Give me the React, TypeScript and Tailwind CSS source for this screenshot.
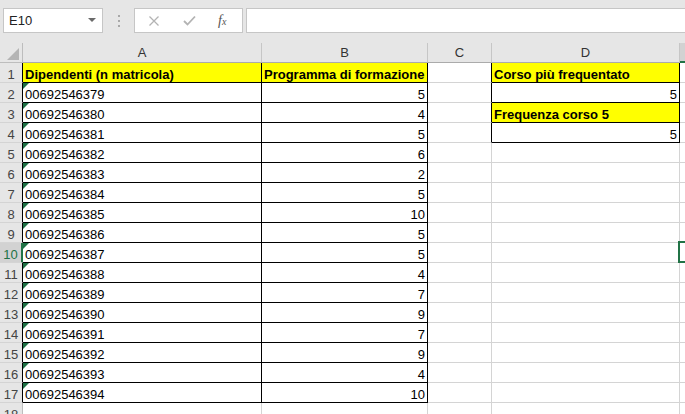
import React from 'react';

const ids = [
  '00692546379', '00692546380', '00692546381', '00692546382', '00692546383', '00692546384',
  '00692546385', '00692546386', '00692546387', '00692546388', '00692546389', '00692546390',
  '00692546391', '00692546392', '00692546393', '00692546394',
];
const corsi = [5, 4, 5, 6, 2, 5, 10, 5, 5, 4, 7, 9, 7, 9, 4, 10];

const dCells: Record<number, { text: string; head?: boolean }> = {
  1: { text: 'Corso più frequentato', head: true },
  2: { text: '5' },
  3: { text: 'Frequenza corso 5', head: true },
  4: { text: '5' },
};

const cellBase = 'h-[20px] shrink-0 border-b border-r flex items-end leading-[15px] text-[13px] text-black relative';

function GreenFlag() {
  return (
    <svg className="absolute left-0 top-0" width="6" height="6" viewBox="0 0 6 6">
      <polygon points="0,0 6,0 0,6" fill="#1e7145" />
    </svg>
  );
}

function Toolbar() {
  return (
    <div className="h-[43px] bg-[#e6e6e6] flex items-start pt-[8px] pl-[3px]">
      <div className="w-[100px] h-[25px] border border-[#c6c6c6] bg-white flex items-center justify-between pl-[5px] pr-[6px] text-[13px] text-[#222]">
        <span>E10</span>
        <svg width="8" height="5" viewBox="0 0 8 5">
          <polygon points="0,0 8,0 4,4" fill="#6a6a6a" />
        </svg>
      </div>
      <div className="w-[31px] h-[25px] flex flex-col items-center justify-center gap-[3px]">
        <span className="w-[2px] h-[2px] bg-[#a8a8a8]" />
        <span className="w-[2px] h-[2px] bg-[#a8a8a8]" />
        <span className="w-[2px] h-[2px] bg-[#a8a8a8]" />
      </div>
      <div className="w-[109px] h-[25px] border border-[#c6c6c6] bg-white flex items-center pl-[13px]">
        <svg width="12" height="12" viewBox="0 0 12 12">
          <path d="M1.5 1.5 L10.5 10.5 M10.5 1.5 L1.5 10.5" stroke="#b3b3b3" strokeWidth="1.3" fill="none" />
        </svg>
        <svg className="ml-[23px]" width="13" height="11" viewBox="0 0 13 11">
          <path d="M1 6 L4.5 9.5 L12 1.5" stroke="#b3b3b3" strokeWidth="1.8" fill="none" />
        </svg>
        <span className="ml-[22px] text-[14px] italic text-[#555] font-['Liberation_Serif',serif] leading-none">
          f<span className="text-[10px]">x</span>
        </span>
      </div>
      <div className="ml-[3px] flex-1 h-[25px] border border-r-0 border-[#c6c6c6] bg-white" />
    </div>
  );
}

function HeaderRow() {
  const cols: [string, string][] = [
    ['A', 'w-[239px]'],
    ['B', 'w-[166px]'],
    ['C', 'w-[64px]'],
    ['D', 'w-[188px]'],
  ];
  return (
    <div className="flex h-[20px] bg-[#e6e6e6]">
      <div className="w-[23px] shrink-0 h-[20px] border-r border-b border-[#bdbdbd] relative">
        <svg className="absolute left-[7px] top-[5px]" width="12" height="12" viewBox="0 0 12 12">
          <polygon points="12,0 12,12 0,12" fill="#b4b4b4" />
        </svg>
      </div>
      {cols.map(([c, w]) => (
        <div
          key={c}
          className={`${w} shrink-0 h-[20px] border-r border-r-[#c6c6c6] border-b border-b-[#ababab] flex items-center justify-center text-[13px] text-[#333]`}
        >
          {c}
        </div>
      ))}
      <div className="flex-1 h-[20px] bg-[#d2d2d2] border-b-2 border-[#217346]" />
    </div>
  );
}

function Row({ n }: { n: number }) {
  const inTable = n <= 17;
  const d = dCells[n];
  const selected = n === 10;
  return (
    <div className="flex">
      <div
        className={`w-[23px] shrink-0 h-[20px] border-b border-b-[#d4d4d4] flex items-end justify-center leading-[15px] text-[13px] ${
          selected
            ? 'bg-[#d2d2d2] text-[#217346] border-r-2 border-r-[#217346]'
            : `bg-[#e6e6e6] text-[#444] border-r ${inTable ? 'border-r-black' : 'border-r-[#bdbdbd]'}`
        }`}
      >
        {n}
      </div>
      <div
        className={`${cellBase} w-[239px] pl-[2px] ${
          inTable ? 'border-black' : 'border-[#d4d4d4]'
        } ${n === 1 ? 'bg-[#ffff00] font-bold' : ''}`}
      >
        {n >= 2 && inTable && <GreenFlag />}
        {n === 1 ? 'Dipendenti (n matricola)' : inTable ? ids[n - 2] : ''}
      </div>
      <div
        className={`${cellBase} w-[166px] px-[2px] ${
          inTable ? 'border-black' : 'border-[#d4d4d4]'
        } ${n === 1 ? 'bg-[#ffff00] font-bold justify-start' : 'justify-end'}`}
      >
        {n === 1 ? 'Programma di formazione' : inTable ? corsi[n - 2] : ''}
      </div>
      <div
        className={`${cellBase} w-[64px] border-b-[#d4d4d4] ${d ? 'border-r-black' : 'border-r-[#d4d4d4]'}`}
      />
      <div
        className={`${cellBase} w-[188px] px-[2px] ${d ? 'border-black' : 'border-[#d4d4d4]'} ${
          d?.head ? 'bg-[#ffff00] font-bold justify-start' : 'justify-end'
        }`}
      >
        {d?.text}
      </div>
      <div className="flex-1 h-[20px] border-b border-[#d4d4d4] relative">
        {selected && <div className="absolute -left-[2px] -top-[2px] -bottom-[1px] -right-[2px] border-2 border-[#217346]" />}
      </div>
    </div>
  );
}

export default function App() {
  const rows = Array.from({ length: 18 }, (_, i) => i + 1);
  return (
    <div className="w-[685px] h-[414px] overflow-hidden bg-white font-['Liberation_Sans',Arial,sans-serif]">
      <Toolbar />
      <HeaderRow />
      {rows.map((n) => (
        <Row key={n} n={n} />
      ))}
    </div>
  );
}
